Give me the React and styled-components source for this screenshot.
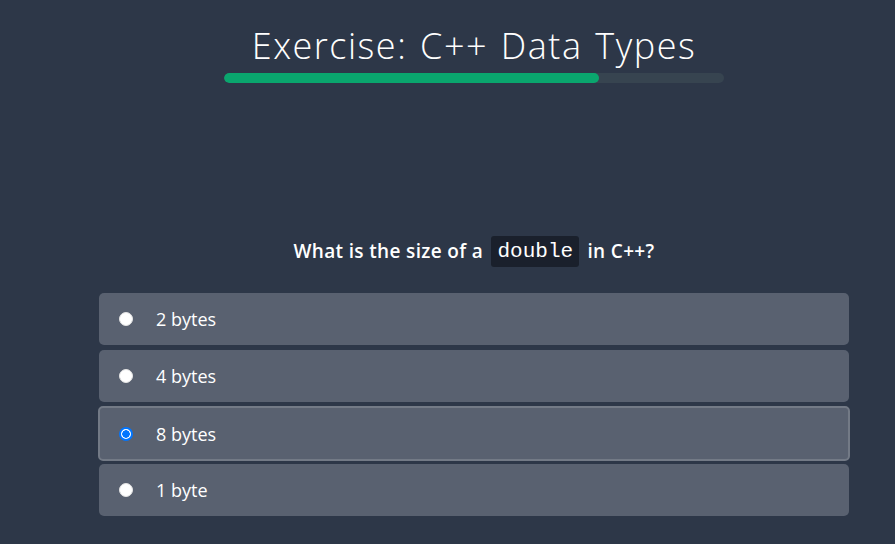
import { useState } from "react";
import styled, { createGlobalStyle } from "styled-components";

const GlobalStyle = createGlobalStyle`
  html, body {
    margin: 0;
    background: #2d3748;
  }
  body {
    font-family: "Open Sans", "Noto Sans", sans-serif;
    color: #fff;
  }
`;

const options = ["2 bytes", "4 bytes", "8 bytes", "1 byte"];

const App = () => {
  const [selected, setSelected] = useState(2);
  const progress = 0.75;

  return (
    <>
      <GlobalStyle />
      <Page>
        <Header>
          <Title>Exercise: C++ Data Types</Title>
          <Track>
            <Fill style={{ width: `${progress * 100}%` }} />
          </Track>
        </Header>

        <Question>
          What is the size of a <Code>double</Code> in C++?
        </Question>

        <OptionList>
          {options.map((label, i) => (
            <Option key={label} $active={selected === i}>
              <Radio
                type="radio"
                name="answer"
                checked={selected === i}
                onChange={() => setSelected(i)}
              />
              <span>{label}</span>
            </Option>
          ))}
        </OptionList>
      </Page>
    </>
  );
};
export default App;

const Page = styled.main`
  width: 750px;
  margin-left: 99px;
  padding-top: 22px;
  display: flex;
  flex-direction: column;
  align-items: center;
`;

const Header = styled.header`
  width: 500px;
  display: flex;
  flex-direction: column;
  align-items: center;
`;

const Title = styled.h1`
  margin: 0;
  font-size: 36px;
  font-weight: 300;
  line-height: 48px;
  letter-spacing: 1.5px;
  word-spacing: 2px;
  white-space: nowrap;
`;

const Track = styled.div`
  margin-top: 3px;
  width: 100%;
  height: 10px;
  border-radius: 5px;
  background: #374450;
  overflow: hidden;
`;

const Fill = styled.div`
  height: 100%;
  border-radius: 5px;
  background: #0aa66e;
`;

const Question = styled.p`
  margin: 153px 0 0;
  font-size: 19px;
  font-weight: 600;
  line-height: 31px;
  letter-spacing: 0.35px;
`;

const Code = styled.code`
  display: inline-block;
  margin: 0 3px;
  padding: 0 6px;
  border-radius: 3px;
  background: #1a202c;
  font-family: "Liberation Mono", "DejaVu Sans Mono", monospace;
  font-size: 21px;
  font-weight: 400;
  letter-spacing: 0;
  line-height: 31px;
  vertical-align: top;
`;

const OptionList = styled.div`
  margin-top: 26px;
  width: 100%;
  display: flex;
  flex-direction: column;
  gap: 5px;
`;

const Option = styled.label`
  box-sizing: border-box;
  height: ${({ $active }) => ($active ? "55px" : "52px")};
  margin: ${({ $active }) => ($active ? "-1px -1px -2px" : "0")};
  display: flex;
  align-items: center;
  gap: 23px;
  padding-left: ${({ $active }) => ($active ? "19px" : "20px")};
  border-radius: 5px;
  background: #596170;
  border: ${({ $active }) => ($active ? "2px solid #737a86" : "none")};
  font-size: 18px;
  font-weight: 400;
  cursor: pointer;
`;

const Radio = styled.input`
  appearance: none;
  margin: 0;
  width: 14px;
  height: 14px;
  border-radius: 50%;
  background: #fff;
  border: 1px solid #e4e4e4;
  box-sizing: border-box;
  &:checked {
    border: 2px solid #0075ff;
    background: radial-gradient(circle, #0075ff 0 3.5px, #fff 4px);
  }
`;
